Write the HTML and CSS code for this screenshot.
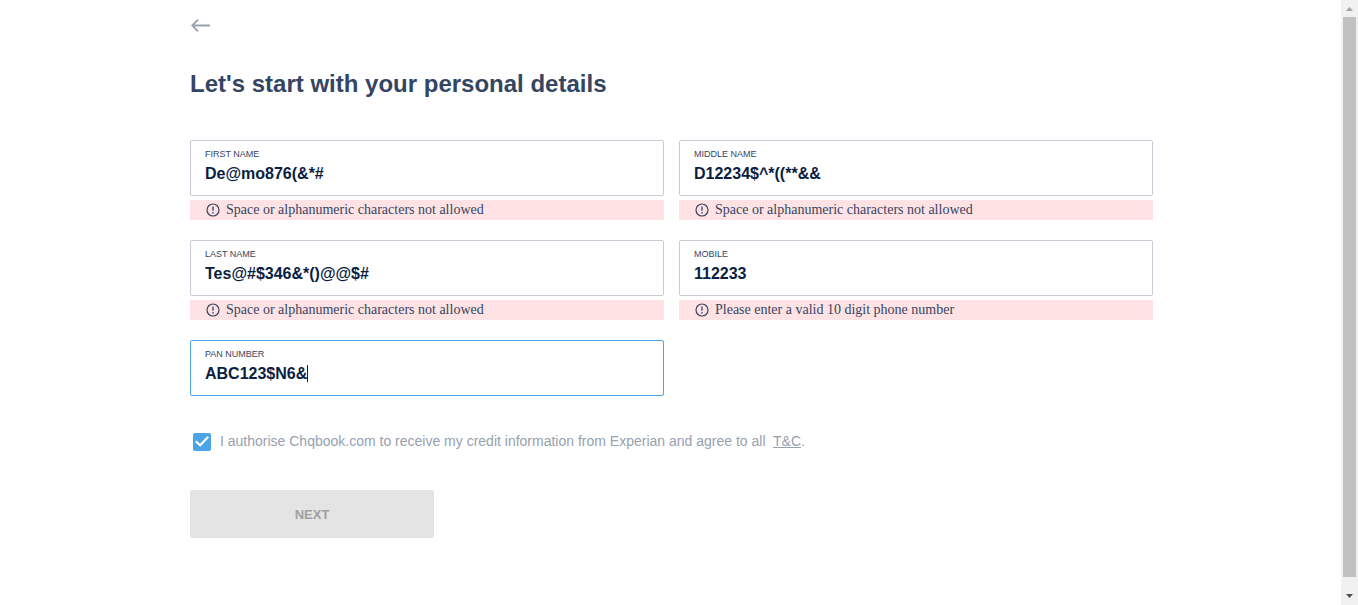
FILE: index.html
```html
<!DOCTYPE html>
<html lang="en">
<head>
<meta charset="utf-8">
<title>Personal details</title>
<link rel="stylesheet" href="styles.css">
</head>
<body>
<svg class="defs" aria-hidden="true">
  <symbol id="alert" viewBox="0 0 14 14">
    <circle cx="7" cy="7" r="6" fill="none" stroke="currentColor" stroke-width="1.2"/>
    <path d="M7 3.500v4.200M7 9v1.400" stroke="currentColor" stroke-width="1.3"/>
  </symbol>
</svg>
<div class="page">
  <main class="content">
    <button class="back" type="button" aria-label="Back">
      <svg width="20" height="14" viewBox="0 0 20 14" fill="none" stroke="currentColor" stroke-width="1.8"><path d="M20 6.500H2.500M8 .700L2.200 6.500 8 12.300"/></svg>
    </button>
    <h1 class="title">Let's start with your personal details</h1>
    <form class="form">
      <div class="fields">
        <div class="field">
          <div class="box">
            <label class="label" for="first">FIRST NAME</label>
            <input class="input" id="first" type="text" value="De@mo876(&amp;*#">
          </div>
          <p class="error"><svg class="error-icon"><use href="#alert"/></svg>Space or alphanumeric characters not allowed</p>
        </div>
        <div class="field">
          <div class="box">
            <label class="label" for="middle">MIDDLE NAME</label>
            <input class="input" id="middle" type="text" value="D12234$^*((**&amp;&amp;">
          </div>
          <p class="error"><svg class="error-icon"><use href="#alert"/></svg>Space or alphanumeric characters not allowed</p>
        </div>
        <div class="field">
          <div class="box">
            <label class="label" for="last">LAST NAME</label>
            <input class="input" id="last" type="text" value="Tes@#$346&amp;*()@@$#">
          </div>
          <p class="error"><svg class="error-icon"><use href="#alert"/></svg>Space or alphanumeric characters not allowed</p>
        </div>
        <div class="field">
          <div class="box">
            <label class="label" for="mobile">MOBILE</label>
            <input class="input" id="mobile" type="text" value="112233">
          </div>
          <p class="error"><svg class="error-icon"><use href="#alert"/></svg>Please enter a valid 10 digit phone number</p>
        </div>
        <div class="field">
          <div class="box box-active">
            <label class="label" for="pan">PAN NUMBER</label>
            <input class="input" id="pan" type="text" value="ABC123$N6&amp;">
            <span class="caret"></span>
          </div>
        </div>
      </div>
      <div class="consent">
        <input class="check" id="agree" type="checkbox" checked>
        <label for="agree">I authorise Chqbook.com to receive my credit information from Experian and agree to all&nbsp; <a class="terms" href="#">T&amp;C</a>.</label>
      </div>
      <button class="next" type="button" disabled>NEXT</button>
    </form>
  </main>
  <div class="scrollbar" aria-hidden="true">
    <svg class="arrow arrow-up" viewBox="0 0 17 17"><path d="M5 11h7L8.500 7z"/></svg>
    <div class="track"><div class="thumb"></div></div>
    <svg class="arrow" viewBox="0 0 17 17"><path d="M5 6h7L8.500 10z"/></svg>
  </div>
</div>
</body>
</html>
```
FILE: styles.css
```css
* {
  box-sizing: border-box;
}

body {
  margin: 0;
  background: #fff;
  font-family: "Liberation Sans", Arial, sans-serif;
  color: #344563;
}

.defs {
  display: none;
}

.page {
  display: flex;
  height: 100vh;
  overflow: hidden;
}

.content {
  flex: 1;
  padding: 19px 188px 0 190px;
}

.back {
  display: block;
  padding: 0;
  border: 0;
  background: none;
  color: #97a1b0;
}

.back svg {
  display: block;
}

.title {
  margin: 37px 0 42px;
  font-size: 24px;
  line-height: 28px;
}

.fields {
  display: grid;
  grid-template-columns: 1fr 1fr;
  gap: 20px 15px;
}

.box {
  position: relative;
  height: 56px;
  padding: 7px 14px;
  border: 1px solid #c9ccd6;
  border-radius: 2px;
}

.box-active {
  border-color: #4ba3e8;
}

.label {
  display: block;
  font-size: 9px;
  line-height: 12px;
}

.input {
  display: block;
  width: 100%;
  height: 20px;
  margin-top: 4px;
  padding: 0;
  border: 0;
  outline: 0;
  background: none;
  color: #091e42;
  font: bold 16px/20px "Liberation Sans", Arial, sans-serif;
}

.caret {
  position: absolute;
  top: 24px;
  left: 116px;
  width: 1px;
  height: 17px;
  background: #091e42;
}

.error {
  display: flex;
  align-items: center;
  gap: 6px;
  height: 20px;
  margin: 4px 0 0;
  padding-left: 16px;
  background: #ffe3e4;
  font: 14px/20px "Liberation Serif", "Times New Roman", serif;
}

.error-icon {
  width: 14px;
  height: 14px;
}

.consent {
  display: flex;
  align-items: center;
  gap: 9px;
  margin: 36px 0 39px;
  padding-left: 3px;
  color: #97a1b0;
  font-size: 14px;
  line-height: 19px;
}

.check {
  appearance: none;
  width: 18px;
  height: 18px;
  margin: 0;
  border-radius: 2px;
  background: #4ba3e8;
  display: grid;
  place-items: center;
}

.check:checked::before {
  content: "";
  width: 14px;
  height: 11px;
  background: #fff;
  clip-path: polygon(0 54%, 10% 42%, 36% 70%, 89% 0, 100% 13%, 37% 98%);
}

.terms {
  color: inherit;
}

.next {
  display: block;
  width: 244px;
  height: 48px;
  padding: 2px 0 0;
  border: 0;
  border-radius: 2px;
  background: #e4e4e4;
  color: #a0a0a0;
  font: bold 13px/16px "Liberation Sans", Arial, sans-serif;
}

.scrollbar {
  display: flex;
  flex-direction: column;
  width: 17px;
  background: #f1f1f1;
}

.arrow {
  width: 17px;
  height: 17px;
  fill: #505050;
}

.arrow-up {
  fill: #a3a3a3;
}

.track {
  flex: 1;
  padding: 0 2px;
}

.thumb {
  height: 98%;
  background: #c1c1c1;
}
```
